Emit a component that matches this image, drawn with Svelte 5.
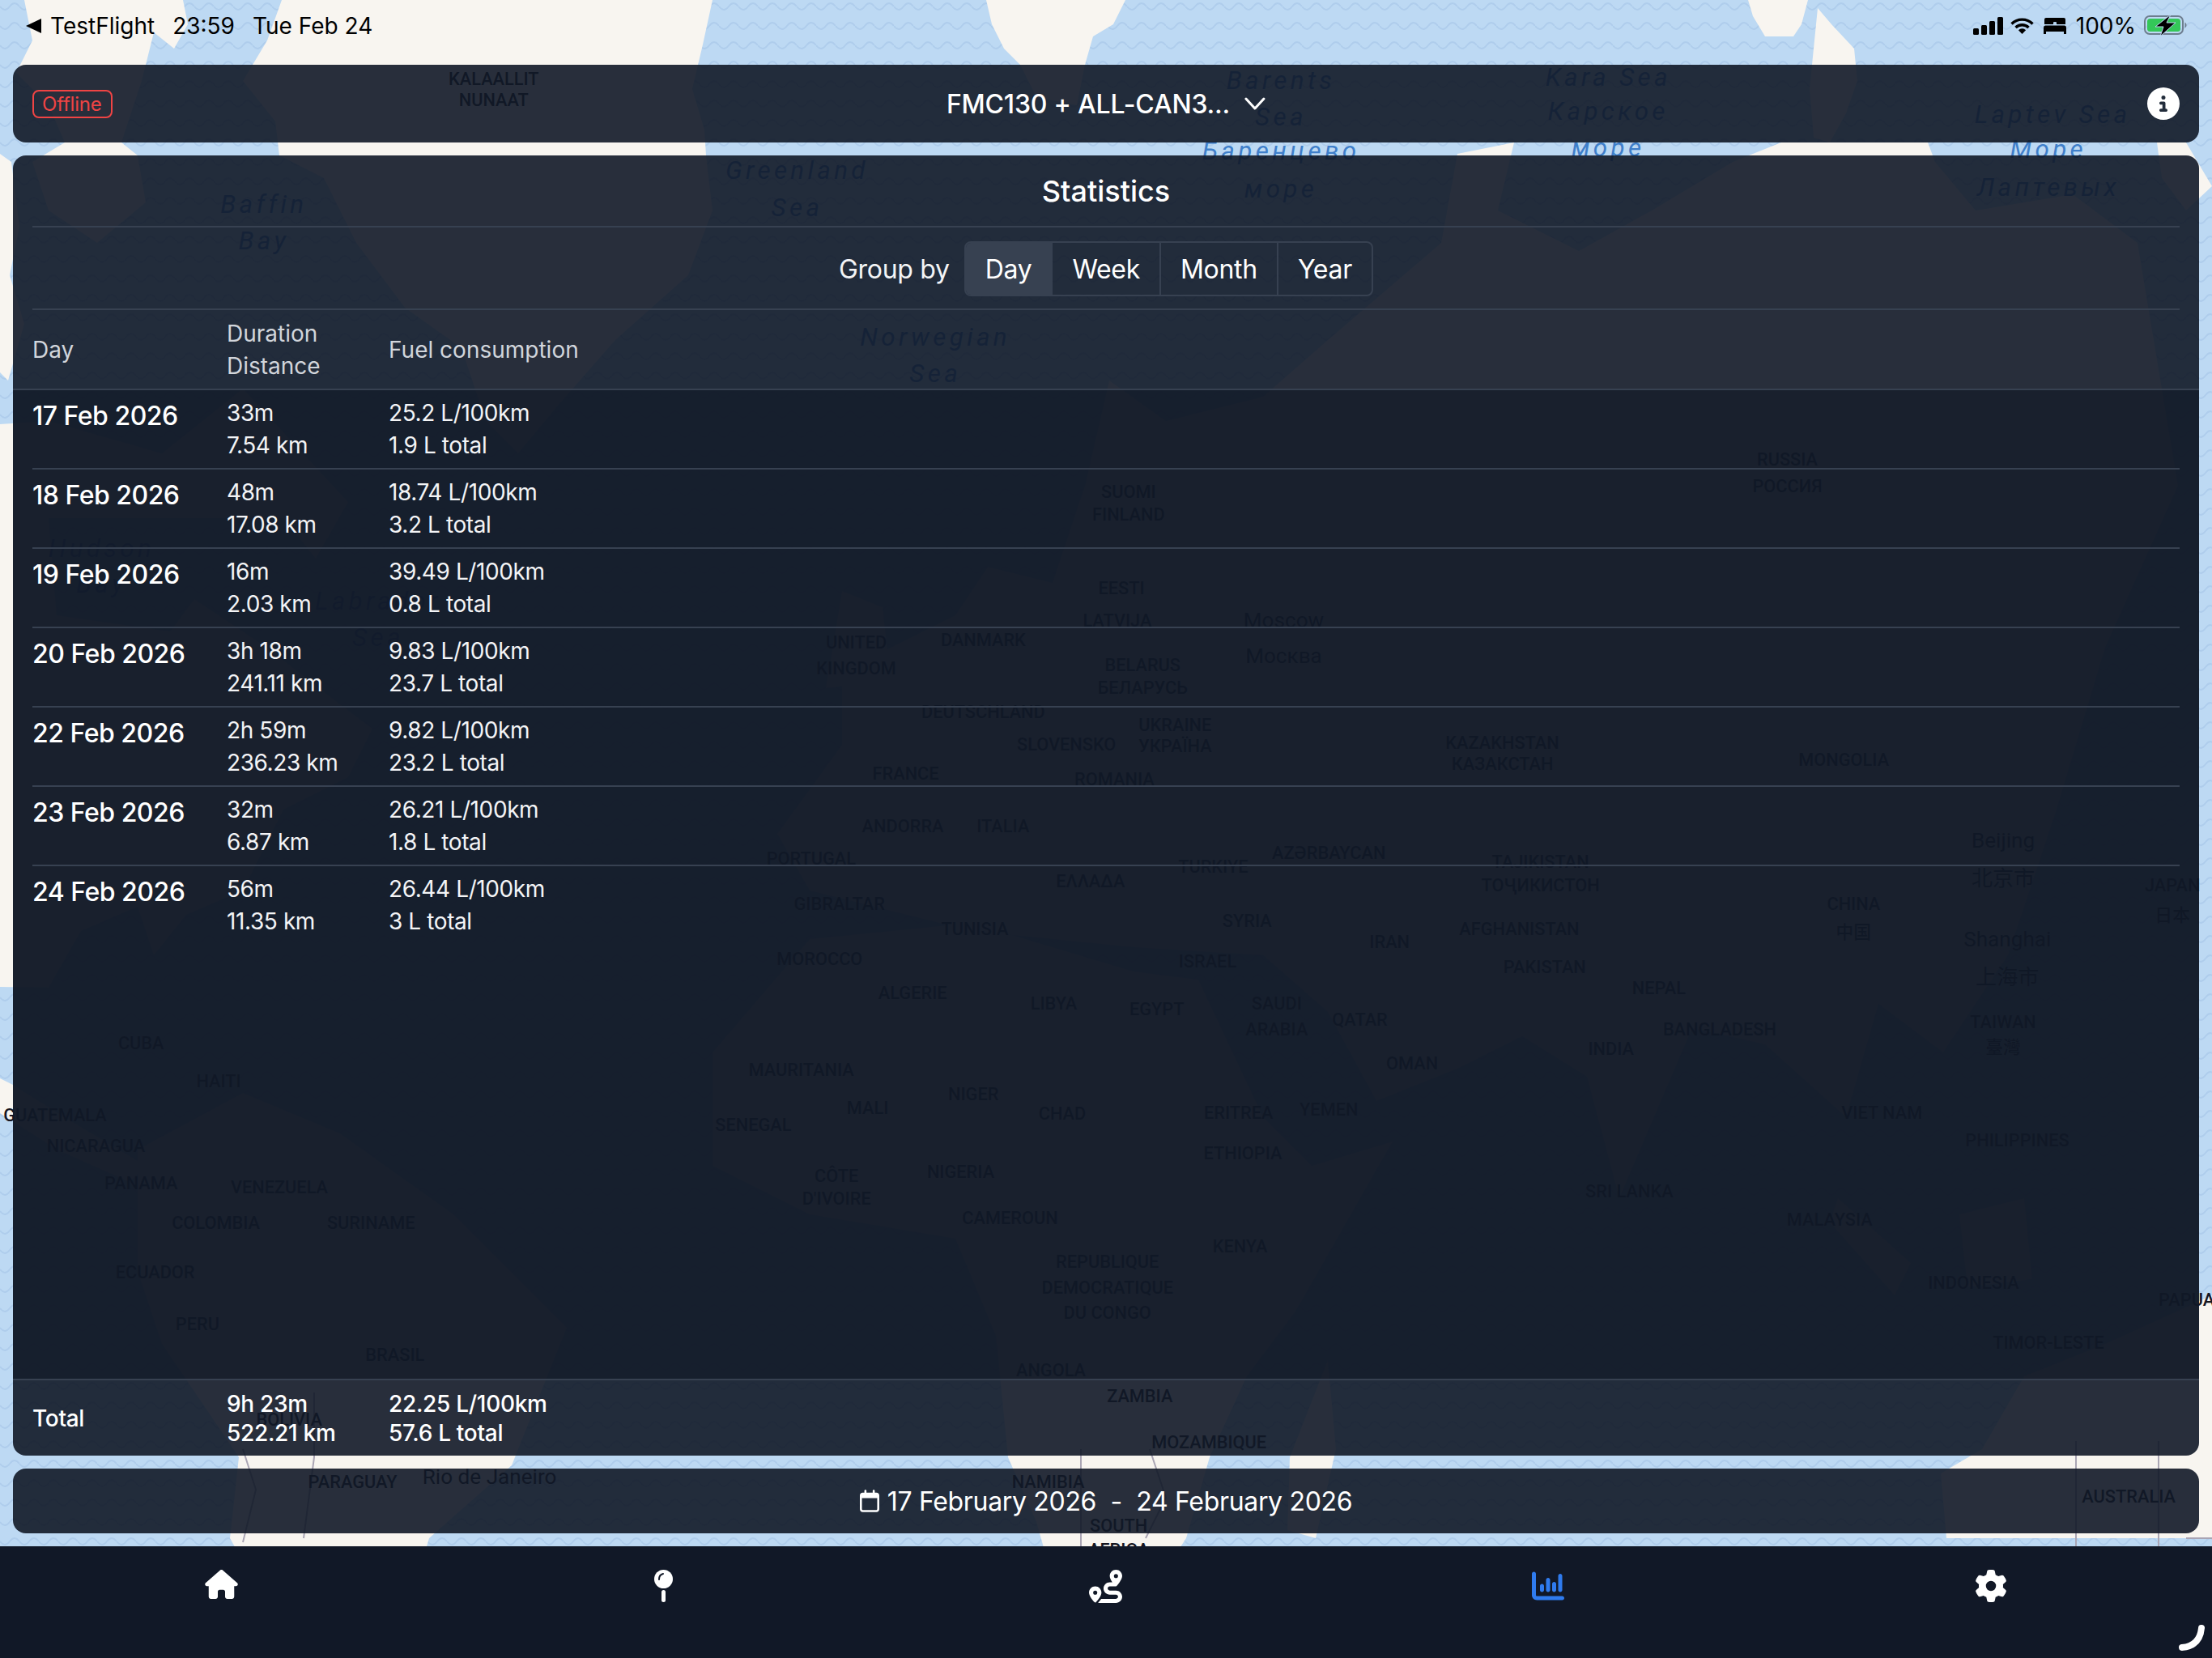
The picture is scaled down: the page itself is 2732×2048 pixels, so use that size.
<script lang="ts">
	const days = [
		{ day: '17 Feb 2026', time: '33m', dist: '7.54 km', rate: '25.2 L/100km', fuel: '1.9 L total' },
		{ day: '18 Feb 2026', time: '48m', dist: '17.08 km', rate: '18.74 L/100km', fuel: '3.2 L total' },
		{ day: '19 Feb 2026', time: '16m', dist: '2.03 km', rate: '39.49 L/100km', fuel: '0.8 L total' },
		{ day: '20 Feb 2026', time: '3h 18m', dist: '241.11 km', rate: '9.83 L/100km', fuel: '23.7 L total' },
		{ day: '22 Feb 2026', time: '2h 59m', dist: '236.23 km', rate: '9.82 L/100km', fuel: '23.2 L total' },
		{ day: '23 Feb 2026', time: '32m', dist: '6.87 km', rate: '26.21 L/100km', fuel: '1.8 L total' },
		{ day: '24 Feb 2026', time: '56m', dist: '11.35 km', rate: '26.44 L/100km', fuel: '3 L total' }
	];

	const groups = ['Day', 'Week', 'Month', 'Year'];

	const land = [
		'M30 0L226 0L232 30L215 60L190 40L175 100L150 176L170 192L180 250L120 300L60 260L40 200L80 176L60 130L20 90L40 50Z',
		'M0 524L60 520L200 560L300 480L430 620L390 690L350 640L260 640L60 640L70 760L210 780L240 740L330 800L420 870L460 900L430 960L350 1000L300 1100L230 1130L190 1180L170 1120L100 1150L60 1220L0 1219Z',
		'M0 190L14 200L24 280L12 340L30 400L10 470L0 460Z',
		'M348 0L880 0L868 55L855 110L870 160L872 192L880 260L850 340L760 420L690 500L640 560L600 520L570 430L500 380L440 300L400 220L345 192L340 150L300 100L330 50Z',
		'M1218 0L1390 0L1375 30L1350 45L1340 80L1330 130L1280 120L1260 80L1240 60L1225 30Z',
		'M2159 0L2233 0L2225 30L2215 45L2180 45L2165 20Z',
		'M2245 10L2262 30L2290 60L2294 100L2280 140L2260 176L2240 170L2235 110L2240 60Z',
		'M1370 470L1440 520L1560 490L1640 420L1780 300L1800 190L1870 176L1850 260L1950 310L2040 260L2140 200L2200 176L2381 176L2390 200L2440 260L2560 240L2640 300L2690 600L2600 800L2540 1000L2480 1180L2400 1300L2320 1240L2280 1380L2180 1290L2090 1270L2000 1480L1960 1330L1880 1280L1800 1320L1700 1360L1640 1250L1560 1180L1400 1170L1200 1150L1000 1100L960 1030L1040 920L1040 830L1100 800L1180 760L1220 700L1300 720L1340 600Z',
		'M1040 730L1090 750L1100 840L1020 850Z',
		'M2664 176L2700 176L2732 230L2700 260L2670 220Z',
		'M1000 1160L1200 1140L1400 1200L1480 1210L1560 1380L1620 1440L1720 1410L1600 1620L1540 1700L1494 1800L1465 1900L1400 2000L1300 1950L1280 1880L1245 1800L1230 1650L1180 1530L1000 1500L880 1440L880 1300Z',
		'M1640 1680L1650 1790L1625 1900L1590 1890L1593 1800Z',
		'M170 1420L300 1350L420 1400L560 1500L700 1640L640 1790L632 1810L530 1900L500 2000L340 2000L284 1900L295 1800L200 1660L170 1570Z',
		'M0 1332L16 1340L80 1380L180 1440L160 1460L70 1420L0 1375Z',
		'M2404 1900L2397 1820L2448 1790L2500 1700L2600 1660L2732 1600L2732 1900Z',
		'M2270 1480L2360 1560L2340 1600L2260 1510Z',
		'M2420 1500L2500 1480L2510 1580L2430 1590Z'
	];

	const borders = [
		'M300 1790L316 1840L300 1905',
		'M388 1720L388 1800L375 1900',
		'M1335 1790L1335 1910',
		'M1420 1790L1440 1850L1415 1900',
		'M2564 1780L2564 1910',
		'M2666 1780L2666 1910',
		'M2700 1900L2732 1900'
	];

	// map labels, placed in the 1568 wide coordinates of the map
	const places = [
		['KALAALLIT', 350, 60], ['NUNAAT', 350, 75],
		['RUSSIA', 1267, 330], ['РОССИЯ', 1267, 349],
		['SUOMI', 800, 353], ['FINLAND', 800, 369],
		['EESTI', 795, 421], ['LATVIJA', 792, 444],
		['UNITED', 607, 460], ['KINGDOM', 607, 478], ['DANMARK', 697, 458],
		['BELARUS', 810, 476], ['БЕЛАРУСЬ', 810, 492], ['DEUTSCHLAND', 697, 509],
		['UKRAINE', 833, 518], ['УКРАЇНА', 833, 533], ['KAZAKHSTAN', 1065, 531],
		['КАЗАКСТАН', 1065, 546], ['MONGOLIA', 1307, 543], ['SLOVENSKO', 756, 532],
		['FRANCE', 642, 553], ['ROMANIA', 790, 557], ['ANDORRA', 640, 590], ['ITALIA', 711, 590],
		['PORTUGAL', 575, 613], ['GIBRALTAR', 595, 645], ['TURKIYE', 860, 619],
		['AZƏRBAYCAN', 942, 609], ['ΕΛΛΑΔΑ', 773, 629], ['TAJIKISTAN', 1092, 615],
		['ТОҶИКИСТОН', 1092, 632], ['CHINA', 1314, 645], ['中国', 1314, 665],
		['JAPAN', 1540, 632], ['日本', 1540, 653], ['AFGHANISTAN', 1077, 663],
		['TUNISIA', 691, 663], ['SYRIA', 884, 657], ['IRAN', 985, 672], ['ISRAEL', 856, 686],
		['PAKISTAN', 1095, 690], ['MOROCCO', 581, 684], ['ALGERIE', 647, 708], ['LIBYA', 747, 716],
		['EGYPT', 820, 720], ['SAUDI', 905, 716], ['ARABIA', 905, 734], ['QATAR', 964, 727],
		['NEPAL', 1176, 705], ['TAIWAN', 1420, 729], ['臺灣', 1420, 747], ['INDIA', 1142, 748],
		['BANGLADESH', 1219, 734], ['OMAN', 1001, 758], ['CUBA', 100, 744], ['HAITI', 155, 771],
		['GUATEMALA', 39, 795], ['NICARAGUA', 68, 817], ['PANAMA', 100, 843], ['VENEZUELA', 198, 846],
		['COLOMBIA', 153, 871], ['SURINAME', 263, 871], ['ECUADOR', 110, 906], ['PERU', 140, 943],
		['BRASIL', 280, 965], ['MAURITANIA', 568, 763], ['MALI', 615, 790], ['NIGER', 690, 780],
		['CHAD', 753, 794], ['ERITREA', 878, 793], ['YEMEN', 942, 791], ['SENEGAL', 534, 802],
		['VIET NAM', 1334, 793], ['PHILIPPINES', 1430, 813], ['NIGERIA', 681, 835], ['CÔTE', 593, 838],
		["D'IVOIRE", 593, 854], ['ETHIOPIA', 881, 822], ['SRI LANKA', 1155, 849], ['CAMEROUN', 716, 868],
		['MALAYSIA', 1297, 869], ['KENYA', 879, 888], ['REPUBLIQUE', 785, 899], ['DEMOCRATIQUE', 785, 917],
		['DU CONGO', 785, 935], ['INDONESIA', 1399, 914], ['TIMOR-LESTE', 1452, 956], ['PAPUA', 1550, 926],
		['ANGOLA', 745, 976], ['ZAMBIA', 808, 994], ['MOZAMBIQUE', 857, 1027], ['BOLIVIA', 205, 1011],
		['PARAGUAY', 250, 1055], ['NAMIBIA', 743, 1055], ['SOUTH', 793, 1086], ['AFRICA', 793, 1103],
		['AUSTRALIA', 1509, 1065]
	];

	const cities = [
		['Moscow', 910, 445], ['Москва', 910, 470], ['Beijing', 1420, 601], ['北京市', 1420, 628],
		['Shanghai', 1423, 671], ['上海市', 1423, 698], ['Rio de Janeiro', 347, 1052]
	];

	const seas = [
		['Baffin', 187, 151], ['Bay', 187, 177], ['Greenland', 565, 127], ['Sea', 565, 153],
		['Barents', 908, 63], ['Sea', 908, 89], ['Баренцево', 908, 113], ['море', 908, 140],
		['Kara Sea', 1140, 61], ['Карское', 1140, 85], ['море', 1140, 111],
		['Laptev Sea', 1455, 87], ['Море', 1452, 112], ['Лаптевых', 1452, 139],
		['Norwegian', 663, 245], ['Sea', 663, 271], ['Hudson', 72, 395], ['Bay', 72, 420],
		['Labrador', 268, 432], ['Sea', 268, 458]
	];
</script>

<div class="stage">
	<svg class="map" viewBox="0 0 2732 2048" aria-hidden="true">
		<defs>
			<pattern id="waves" width="24" height="24" patternUnits="userSpaceOnUse">
				<path d="M0 8q6 8 12 0t12 0" fill="none" stroke="#afcdec" stroke-width="2" />
			</pattern>
		</defs>
		<rect width="2732" height="2048" fill="#bdd9f3" />
		<rect width="2732" height="2048" fill="url(#waves)" />
		{#each land as d}
			<path {d} fill="#f8f5f0" />
		{/each}
		{#each borders as d}
			<path {d} fill="none" stroke="#aaa5b4" stroke-width="2" />
		{/each}
		<g transform="scale(1.7423)">
			{#each places as [name, x, y]}
				<text {x} {y} class="place">{name}</text>
			{/each}
			{#each cities as [name, x, y]}
				<text {x} {y} class="city">{name}</text>
			{/each}
			{#each seas as [name, x, y]}
				<text {x} {y} class="sea">{name}</text>
			{/each}
		</g>
	</svg>

	<div class="status">
		<div class="status-left">
			<svg width="20" height="18" viewBox="0 0 20 18"><path d="M19 0V18L0 9Z" fill="#000" /></svg>
			<span>TestFlight</span>
			<span class="clock">23:59</span>
			<span class="clock">Tue Feb 24</span>
		</div>
		<div class="status-right">
			<svg width="37" height="22" viewBox="0 0 37 22" fill="#000">
				<rect x="0" y="14" width="7" height="8" rx="1.5" />
				<rect x="10" y="10" width="7" height="12" rx="1.5" />
				<rect x="20" y="5" width="7" height="17" rx="1.5" />
				<rect x="30" y="0" width="7" height="22" rx="1.5" />
			</svg>
			<svg class="wifi" width="29" height="20" viewBox="0 0 29 20" fill="none" stroke="#000" stroke-width="3.4">
				<path d="M1.5 7.5a18.5 18.5 0 0 1 26 0" />
				<path d="M6.5 12a11.5 11.5 0 0 1 16 0" />
				<path d="M14.5 20l-4.6-4.8a6.6 6.6 0 0 1 9.2 0Z" fill="#000" stroke="none" />
			</svg>
			<svg class="bed" width="28" height="20" viewBox="0 0 28 20" fill="#000">
				<path d="M3 0H25Q27 0 27 2V8H16V6Q16 5 15 5H13Q12 5 12 6V8H1V2Q1 0 3 0Z" />
				<path d="M2 9.5H26Q28 9.5 28 12V20H25V17H3V20H0V12Q0 9.5 2 9.5Z" />
			</svg>
			<span>100%</span>
			<svg width="54" height="27" viewBox="0 0 54 27">
				<rect x="1" y="2" width="47" height="22" rx="6" fill="none" stroke="#6d7d8e" stroke-width="2" />
				<rect x="4" y="5" width="41" height="16" rx="3.5" fill="#34c759" />
				<path d="M50.5 9.5a4 4 0 0 1 0 7Z" fill="#6d7d8e" />
				<path d="M33 0L14 15H24L20 27L39 10H28Z" fill="#000" stroke="#bdd9f3" stroke-width="1" />
			</svg>
		</div>
	</div>

	<div class="panels">
		<header class="bar top">
			<span class="offline">Offline</span>
			<button class="device">
				<span>FMC130 + ALL-CAN3...</span>
				<svg width="26" height="16" viewBox="0 0 26 16" fill="none" stroke="#fff" stroke-width="3" stroke-linecap="round" stroke-linejoin="round"><path d="M2 2L13 14L24 2" /></svg>
			</button>
			<svg class="info" width="40" height="40" viewBox="0 0 512 512"><path fill="#fff" d="M256 512A256 256 0 1 0 256 0a256 256 0 1 0 0 512zM216 336h24V272H216c-13.3 0-24-10.7-24-24s10.7-24 24-24h48c13.3 0 24 10.7 24 24v88h8c13.3 0 24 10.7 24 24s-10.7 24-24 24H216c-13.3 0-24-10.7-24-24s10.7-24 24-24zm40-208a32 32 0 1 1 0 64 32 32 0 1 1 0-64z" /></svg>
		</header>

		<section class="stats">
			<div class="heading"><h1>Statistics</h1></div>
			<div class="group">
				<span>Group by</span>
				<div class="segments">
					{#each groups as group, i}
						<button class:active={i === 0}>{group}</button>
					{/each}
				</div>
			</div>
			<div class="cols thead">
				<div>Day</div>
				<div>Duration<br />Distance</div>
				<div>Fuel consumption</div>
			</div>
			<div class="rows">
				{#each days as row}
					<div class="cols row">
						<div class="day">{row.day}</div>
						<div>{row.time}<br />{row.dist}</div>
						<div>{row.rate}<br />{row.fuel}</div>
					</div>
				{/each}
			</div>
			<div class="cols total">
				<div>Total</div>
				<div>9h 23m<br />522.21 km</div>
				<div>22.25 L/100km<br />57.6 L total</div>
			</div>
		</section>

		<footer class="bar range">
			<svg width="24" height="28" viewBox="0 0 448 512"><path fill="#fff" d="M152 24c0-13.3-10.7-24-24-24s-24 10.7-24 24V64H64C28.7 64 0 92.7 0 128v16 48V448c0 35.3 28.7 64 64 64H384c35.3 0 64-28.7 64-64V192 144 128c0-35.3-28.7-64-64-64H344V24c0-13.3-10.7-24-24-24s-24 10.7-24 24V64H152V24zM48 192H400V448c0 8.8-7.2 16-16 16H64c-8.8 0-16-7.2-16-16V192z" /></svg>
			<span>17 February 2026 &nbsp;-&nbsp; 24 February 2026</span>
		</footer>
	</div>

	<nav class="tabs">
		<a href="#home"><svg width="41" height="36" viewBox="0 0 576 512"><path fill="#fff" d="M575.8 255.5c0 18-15 32.1-32 32.1h-32l.7 160.2c0 2.7-.2 5.4-.5 8.1V472c0 22.1-17.9 40-40 40H456c-1.1 0-2.2 0-3.3-.1c-1.4 .1-2.8 .1-4.2 .1H416 392c-22.1 0-40-17.9-40-40V448 384c0-17.7-14.3-32-32-32H256c-17.7 0-32 14.3-32 32v64 24c0 22.1-17.9 40-40 40H160 128.1c-1.5 0-3-.1-4.5-.2c-1.2 .1-2.4 .2-3.6 .2H104c-22.1 0-40-17.9-40-40V360c0-.9 0-1.9 .1-2.8V287.6H32c-18 0-32-14-32-32.1c0-9 3-17 10-24L266.4 8c7-7 15-8 22-8s15 2 21 7L564.8 231.5c8 7 12 15 11 24z" /></svg></a>
		<a href="#pin">
			<svg width="23" height="40" viewBox="0 0 23 40">
				<ellipse cx="11.5" cy="11.5" rx="11.5" ry="11.5" fill="#fff" />
				<path d="M6 12Q6 6 11 5" fill="none" stroke="#111827" stroke-width="2" stroke-linecap="round" />
				<rect x="9" y="25" width="5" height="15" rx="2.5" fill="#fff" />
			</svg>
		</a>
		<a href="#route"><svg width="41" height="41" viewBox="0 0 512 512"><path fill="#fff" fill-rule="evenodd" d="M512 96c0 50.2-59.1 125.1-84.6 155c-3.8 4.4-9.4 6.1-14.5 5H320c-17.7 0-32 14.3-32 32s14.3 32 32 32h96c53 0 96 43 96 96s-43 96-96 96H139.6c8.7-9.9 19.3-22.6 30-36.8c6.3-8.4 12.8-17.6 19-27.2H416c17.7 0 32-14.3 32-32s-14.3-32-32-32H320c-53 0-96-43-96-96s43-96 96-96h39.8c-21-31.5-39.8-67.7-39.8-96c0-53 43-96 96-96s96 43 96 96zM117.1 489.1c-3.8 4.3-7.2 8.1-10.1 11.3l-1.8 2-.2-.2c-6 4.6-14.6 4-20-1.8C59.8 473 0 402.5 0 352c0-53 43-96 96-96s96 43 96 96c0 30-21.1 67-43.5 97.9c-10.7 14.7-21.7 28-30.8 38.5l-.6 .7zM128 352a32 32 0 1 0 -64 0 32 32 0 1 0 64 0zM416 128a32 32 0 1 0 0-64 32 32 0 1 0 0 64z" /></svg></a>
		<a href="#stats"><svg width="40" height="40" viewBox="0 0 512 512"><path fill="#2f7bee" d="M32 32c17.7 0 32 14.3 32 32V400c0 8.8 7.2 16 16 16H480c17.7 0 32 14.3 32 32s-14.3 32-32 32H80c-44.2 0-80-35.8-80-80V64C0 46.3 14.3 32 32 32zM160 224c17.7 0 32 14.3 32 32v64c0 17.7-14.3 32-32 32s-32-14.3-32-32V256c0-17.7 14.3-32 32-32zm128-64V320c0 17.7-14.3 32-32 32s-32-14.3-32-32V160c0-17.7 14.3-32 32-32s32 14.3 32 32zm64 32c17.7 0 32 14.3 32 32v96c0 17.7-14.3 32-32 32s-32-14.3-32-32V224c0-17.7 14.3-32 32-32zM480 96V320c0 17.7-14.3 32-32 32s-32-14.3-32-32V96c0-17.7 14.3-32 32-32s32 14.3 32 32z" /></svg></a>
		<a href="#settings"><svg width="40" height="40" viewBox="0 0 512 512"><path fill="#fff" d="M495.9 166.6c3.2 8.7 .5 18.4-6.4 24.6l-43.3 39.4c1.1 8.3 1.7 16.8 1.7 25.4s-.6 17.1-1.7 25.4l43.3 39.4c6.9 6.2 9.6 15.9 6.4 24.6c-4.4 11.9-9.7 23.3-15.8 34.3l-4.7 8.1c-6.6 11-14 21.4-22.1 31.2c-5.9 7.2-15.7 9.6-24.5 6.8l-55.7-17.7c-13.4 10.3-28.2 18.9-44 25.4l-12.5 57.1c-2 9.1-9 16.3-18.2 17.8c-13.8 2.3-28 3.5-42.5 3.5s-28.7-1.2-42.5-3.5c-9.2-1.5-16.2-8.7-18.2-17.8l-12.5-57.1c-15.8-6.5-30.6-15.1-44-25.4L83.1 425.9c-8.8 2.8-18.6 .3-24.5-6.8c-8.1-9.8-15.5-20.2-22.1-31.2l-4.7-8.1c-6.1-11-11.4-22.4-15.8-34.3c-3.2-8.7-.5-18.4 6.4-24.6l43.3-39.4C64.6 273.1 64 264.6 64 256s.6-17.1 1.7-25.4L22.4 191.2c-6.9-6.2-9.6-15.9-6.4-24.6c4.4-11.9 9.7-23.3 15.8-34.3l4.7-8.1c6.6-11 14-21.4 22.1-31.2c5.9-7.2 15.7-9.6 24.5-6.8l55.7 17.7c13.4-10.3 28.2-18.9 44-25.4l12.5-57.1c2-9.1 9-16.3 18.2-17.8C227.3 1.2 241.5 0 256 0s28.7 1.2 42.5 3.5c9.2 1.5 16.2 8.7 18.2 17.8l12.5 57.1c15.8 6.5 30.6 15.1 44 25.4l55.7-17.7c8.8-2.8 18.6-.3 24.5 6.8c8.1 9.8 15.5 20.2 22.1 31.2l4.7 8.1c6.1 11 11.4 22.4 15.8 34.3zM256 336a80 80 0 1 0 0-160 80 80 0 1 0 0 160z" /></svg></a>
		<svg class="grip" width="32" height="32" viewBox="0 0 32 32" fill="none" stroke="#fff" stroke-width="8" stroke-linecap="round"><path d="M28 4Q26 26 4 28" /></svg>
	</nav>
</div>

<style>
	:global(body) {
		margin: 0;
		background: #111827;
	}

	.stage {
		position: relative;
		width: 2732px;
		height: 2048px;
		overflow: hidden;
		display: flex;
		flex-direction: column;
		font-family: Inter, 'Liberation Sans', 'Noto Sans CJK SC', sans-serif;
		color: #fff;
	}

	.map {
		position: absolute;
		inset: 0;
		width: 2732px;
		height: 2048px;
	}

	.place,
	.city,
	.sea {
		text-anchor: middle;
		font-family: Roboto, 'Noto Sans CJK SC', sans-serif;
		fill: #15151f;
	}

	.place {
		font-size: 12.5px;
		font-weight: 500;
	}

	.city {
		font-size: 15px;
	}

	.sea {
		font-size: 18px;
		font-style: italic;
		letter-spacing: 2.5px;
		fill: #3f7fca;
	}

	.status {
		position: relative;
		height: 80px;
		flex: none;
		padding: 0 30px 17px 32px;
		box-sizing: border-box;
		display: flex;
		align-items: center;
		justify-content: space-between;
		color: #000;
		font-size: 28px;
	}

	.status-left,
	.status-right {
		display: flex;
		align-items: center;
	}

	.status-left span:first-of-type {
		margin-left: 10px;
	}

	.clock {
		margin-left: 22px;
	}

	.status-right svg {
		display: block;
	}

	.wifi {
		margin-left: 9px;
	}

	.bed {
		margin-left: 12px;
	}

	.status-right span {
		margin: 0 10px 0 12px;
	}

	.panels {
		position: relative;
		flex: 1;
		min-height: 0;
		padding: 0 16px 16px;
		display: flex;
		flex-direction: column;
		gap: 16px;
	}

	.bar {
		background: rgba(17, 24, 39, 0.9);
		border-radius: 16px;
		flex: none;
	}

	.top {
		height: 96px;
		padding: 0 24px;
		position: relative;
		display: flex;
		align-items: center;
		justify-content: space-between;
	}

	.offline {
		border: 2px solid #ef4444;
		border-radius: 8px;
		color: #ef4444;
		font-size: 24px;
		line-height: 31px;
		padding: 0 11px 0 10px;
		letter-spacing: -0.2px;
	}

	.device {
		position: absolute;
		left: 50%;
		transform: translateX(-50%);
		display: flex;
		align-items: center;
		gap: 18px;
		background: none;
		border: 0;
		padding: 0;
		color: #fff;
		font: 500 32px Inter, sans-serif;
		letter-spacing: -0.2px;
		white-space: nowrap;
	}

	.stats {
		flex: 1;
		min-height: 0;
		background: rgba(17, 24, 39, 0.9);
		border-radius: 16px;
		display: flex;
		flex-direction: column;
		overflow: hidden;
	}

	.heading {
		margin: 0 24px;
		height: 89px;
		flex: none;
		box-sizing: border-box;
		border-bottom: 2px solid #374151;
		display: flex;
		align-items: center;
		justify-content: center;
	}

	h1 {
		margin: 0;
		font-size: 36px;
		font-weight: 500;
	}

	.group {
		margin: 0 24px;
		height: 102px;
		flex: none;
		box-sizing: border-box;
		padding-top: 2px;
		border-bottom: 2px solid #374151;
		display: flex;
		align-items: center;
		justify-content: center;
		gap: 18px;
		font-size: 32px;
		letter-spacing: -0.3px;
		color: #f3f4f6;
	}

	.segments {
		display: flex;
		border: 2px solid #374151;
		border-radius: 8px;
		overflow: hidden;
	}

	.segments button {
		background: none;
		border: 0;
		border-left: 2px solid #374151;
		color: #fff;
		font: 400 32px Inter, sans-serif;
		letter-spacing: -0.3px;
		height: 64px;
		padding: 0 24px;
	}

	.segments button:first-child {
		border-left: 0;
	}

	.segments button.active {
		background: #374151;
	}

	.cols {
		display: grid;
		grid-template-columns: 240px 200px 1fr;
		font-size: 28px;
		line-height: 40px;
	}

	.thead {
		height: 99px;
		flex: none;
		box-sizing: border-box;
		padding: 8px 24px 0;
		align-items: center;
		border-bottom: 2px solid #374151;
		color: #d1d5db;
	}

	.thead div {
		padding-bottom: 8px;
	}

	.rows {
		flex: 1;
		min-height: 0;
		background: rgba(17, 24, 39, 0.65);
		padding: 0 24px;
	}

	.row {
		height: 98px;
		box-sizing: border-box;
		padding: 8px 0;
		align-items: start;
		border-bottom: 2px solid #374151;
		color: #f3f4f6;
		letter-spacing: -0.4px;
	}

	.row:last-child {
		border-bottom: 0;
	}

	.day {
		margin-top: 4px;
		font-size: 32px;
		font-weight: 500;
		color: #fff;
		letter-spacing: -0.5px;
	}

	.total {
		height: 95px;
		flex: none;
		box-sizing: border-box;
		padding: 0 24px;
		align-items: center;
		border-top: 2px solid #374151;
		line-height: 36px;
		font-weight: 500;
		letter-spacing: -0.3px;
	}

	.range {
		height: 80px;
		display: flex;
		align-items: center;
		justify-content: center;
		gap: 10px;
		font-size: 32px;
		letter-spacing: -0.32px;
		white-space: nowrap;
	}

	.range svg {
		display: block;
	}

	.tabs {
		position: relative;
		height: 138px;
		flex: none;
		background: #111827;
		display: grid;
		grid-template-columns: repeat(5, 1fr);
	}

	.tabs a {
		display: flex;
		justify-content: center;
		padding-top: 29px;
		height: 109px;
		box-sizing: border-box;
	}

	.tabs a svg {
		display: block;
	}

	.grip {
		position: absolute;
		right: 9px;
		bottom: 9px;
	}
</style>
